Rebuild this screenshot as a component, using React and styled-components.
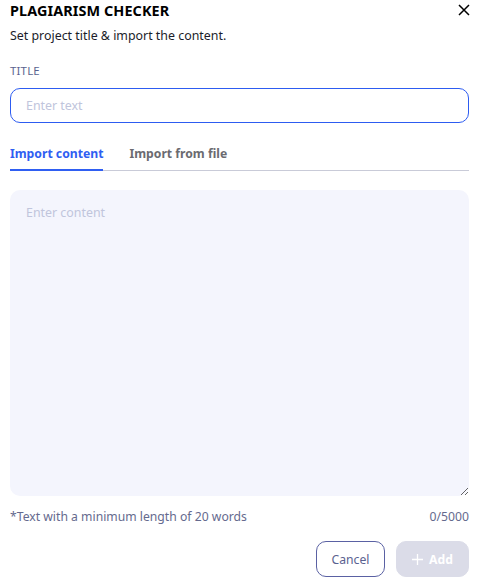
import React, { useState } from 'react';
import styled, { createGlobalStyle } from 'styled-components';

const GlobalStyle = createGlobalStyle`
  body {
    margin: 0;
    background: #ffffff;
    font-family: 'Noto Sans', 'Open Sans', sans-serif;
  }
  * { box-sizing: border-box; }
`;

const Dialog = styled.div`
  width: 479px;
  padding: 0 10px;
  display: flex;
  flex-direction: column;
`;

const Header = styled.div`
  display: flex;
  justify-content: space-between;
  align-items: center;
  height: 20px;
`;

const Heading = styled.h2`
  margin: 0;
  font-size: 14.4px;
  font-weight: 700;
  color: #000000;
  letter-spacing: 0.1px;
`;

const CloseButton = styled.button`
  border: none;
  background: none;
  padding: 0;
  margin-right: -1px;
  width: 12px;
  height: 16px;
  display: flex;
  align-items: center;
  justify-content: center;
  cursor: pointer;
`;

const Subtitle = styled.p`
  margin: 7px 0 0;
  font-size: 12.4px;
  color: #1b1d2a;
`;

const Label = styled.label`
  margin-top: 19px;
  font-size: 11.4px;
  color: #5a628f;
  letter-spacing: 0.2px;
`;

const TextInput = styled.input`
  margin-top: 10px;
  height: 35px;
  width: 100%;
  border: 1px solid #2d5cf1;
  border-radius: 10px;
  padding: 0 15px;
  font-family: inherit;
  font-size: 12.4px;
  outline: none;

  &::placeholder {
    color: #c0c5dc;
  }
`;

const Tabs = styled.div`
  margin-top: 22px;
  display: flex;
  gap: 26px;
  border-bottom: 1px solid #c9cbd8;
`;

const Tab = styled.button`
  border: none;
  background: none;
  padding: 0 0 7px;
  margin-bottom: -1px;
  font-family: inherit;
  font-size: 12.2px;
  font-weight: 700;
  color: ${(p) => (p.active ? '#2f5ef2' : '#6b6b70')};
  border-bottom: 2px solid ${(p) => (p.active ? '#2f5ef2' : 'transparent')};
  cursor: pointer;
`;

const ContentArea = styled.textarea`
  margin-top: 19px;
  height: 306px;
  width: 100%;
  border: none;
  border-radius: 10px;
  background: #f4f5fd;
  padding: 14px 16px;
  font-family: inherit;
  font-size: 12.4px;
  resize: vertical;
  outline: none;

  &::placeholder {
    color: #c0c5dc;
  }
`;

const Hint = styled.div`
  margin-top: 12px;
  display: flex;
  justify-content: space-between;
  font-size: 12.2px;
  color: #656a8e;
`;

const Actions = styled.div`
  margin-top: 16px;
  display: flex;
  justify-content: flex-end;
  gap: 11px;
`;

const Button = styled.button`
  height: 36px;
  border-radius: 10px;
  font-family: inherit;
  font-size: 12.2px;
  display: flex;
  align-items: center;
  justify-content: center;
  gap: 6px;
  cursor: pointer;
  border: 1px solid ${(p) => (p.primary ? '#dbdce8' : '#5a61a3')};
  background: ${(p) => (p.primary ? '#dbdce8' : '#ffffff')};
  color: ${(p) => (p.primary ? '#ffffff' : '#5a6190')};
  font-weight: ${(p) => (p.primary ? 700 : 400)};
  width: ${(p) => (p.primary ? '73px' : '69px')};
`;

const App = () => {
  const [tab, setTab] = useState('content');

  return (
    <>
      <GlobalStyle />
      <Dialog>
        <Header>
          <Heading>PLAGIARISM CHECKER</Heading>
          <CloseButton aria-label="Close">
            <svg width="12" height="12" viewBox="0 0 12 12">
              <path d="M1 1 L11 11 M11 1 L1 11" stroke="#000" strokeWidth="1.5" />
            </svg>
          </CloseButton>
        </Header>
        <Subtitle>Set project title &amp; import the content.</Subtitle>
        <Label>TITLE</Label>
        <TextInput placeholder="Enter text" />
        <Tabs>
          <Tab active={tab === 'content'} onClick={() => setTab('content')}>Import content</Tab>
          <Tab active={tab === 'file'} onClick={() => setTab('file')}>Import from file</Tab>
        </Tabs>
        <ContentArea placeholder="Enter content" />
        <Hint>
          <span>*Text with a minimum length of 20 words</span>
          <span>0/5000</span>
        </Hint>
        <Actions>
          <Button>Cancel</Button>
          <Button primary>
            <svg width="11" height="11" viewBox="0 0 11 11">
              <path d="M5.5 0 V11 M0 5.5 H11" stroke="#fff" strokeWidth="1.3" />
            </svg>
            Add
          </Button>
        </Actions>
      </Dialog>
    </>
  );
};

export default App;
